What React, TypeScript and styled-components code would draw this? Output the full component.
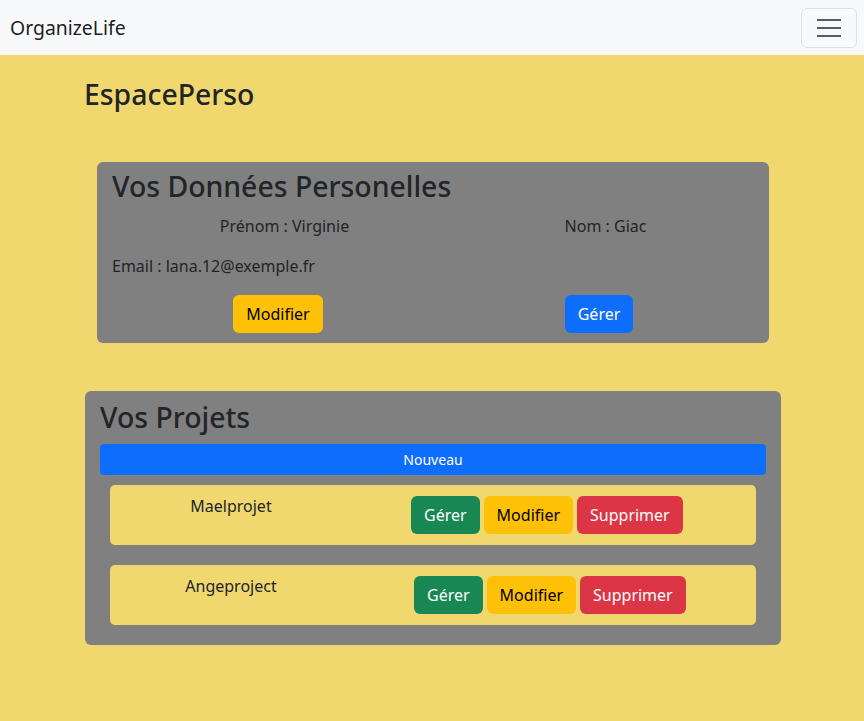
import React from "react";
import styled, { createGlobalStyle } from "styled-components";

const GlobalStyle = createGlobalStyle`
  * { box-sizing: border-box; }
  body {
    margin: 0;
    background: #f0d86f;
    font-family: "Noto Sans", "Open Sans", sans-serif;
    font-size: 16px;
    line-height: 1.5;
    color: #212529;
  }
`;

const Navbar = styled.nav`
  height: 55px;
  background: #f8f9fa;
  display: flex;
  align-items: center;
  justify-content: space-between;
  padding: 0 7px 0 10px;
`;

const Brand = styled.a`
  font-size: 19.4px;
  line-height: 30px;
  color: rgba(0, 0, 0, 0.9);
  text-decoration: none;
`;

const Toggler = styled.button`
  width: 56px;
  height: 40px;
  border: 1px solid rgba(0, 0, 0, 0.1);
  border-radius: 6px;
  background: transparent;
  display: flex;
  align-items: center;
  justify-content: center;
  padding: 0;
`;

const Container = styled.main`
  width: 720px;
  margin: 0 auto;
  padding: 0 11px 40px 13px;
`;

const PageTitle = styled.h2`
  margin: 22px 0 0 -1px;
  font-size: 28.4px;
  font-weight: 500;
  line-height: 1.23;
`;

const Card = styled.section<{ $inset?: boolean }>`
  background: #808080;
  border-radius: 6px;
  margin: ${(p) => (p.$inset ? "50px 12px 0" : "48px 0 0")};
  padding: ${(p) => (p.$inset ? "7px 15px 10px" : "9px 15px 20px")};
`;

const CardTitle = styled.h2<{ $gap: number }>`
  margin: 0 0 ${(p) => p.$gap}px;
  font-size: 28.4px;
  font-weight: 500;
  line-height: 1.23;
`;

const InfoGrid = styled.div<{ $last?: boolean }>`
  display: grid;
  grid-template-columns: 1fr 1fr;
  margin-bottom: ${(p) => (p.$last ? "0" : "16px")};
`;

const InfoCell = styled.p<{ $shift: number }>`
  margin: 0;
  text-align: center;
  padding-left: ${(p) => p.$shift}px;
`;

const InfoLine = styled.p`
  margin: 0 0 17px;
`;

const Button = styled.button<{ $variant: "primary" | "warning" | "success" | "danger"; $small?: boolean }>`
  font-family: inherit;
  font-size: ${(p) => (p.$small ? "14px" : "16px")};
  line-height: ${(p) => (p.$small ? "21px" : "24px")};
  padding: ${(p) => (p.$small ? "4px 8px" : "6px 12px")};
  border-radius: ${(p) => (p.$small ? "4px" : "6px")};
  border: 1px solid transparent;
  cursor: pointer;
  background: ${(p) =>
    ({ primary: "#0d6efd", warning: "#ffc107", success: "#198754", danger: "#dc3545" }[p.$variant])};
  color: ${(p) => (p.$variant === "warning" ? "#000" : "#fff")};
`;

const BlockButton = styled(Button)`
  display: block;
  width: 100%;
`;

const ButtonCell = styled.div<{ $shift: number }>`
  display: flex;
  justify-content: center;
  padding-left: ${(p) => p.$shift}px;
`;

const ProjectRow = styled.div`
  display: flex;
  align-items: flex-start;
  height: 60px;
  margin: 20px 10px 0;
  background: #f0d86f;
  border-radius: 5px;
  &:first-of-type {
    margin-top: 10px;
  }
`;

const ProjectName = styled.div`
  width: 242px;
  text-align: center;
  padding-top: 9px;
`;

const ProjectActions = styled.div<{ $offset: number }>`
  display: flex;
  gap: 4px;
  margin-left: ${(p) => p.$offset}px;
  padding-top: 11px;
`;

const MenuIcon = () => (
  <svg width="30" height="30" viewBox="0 0 30 30" aria-hidden="true">
    <path
      d="M3 7h24M3 15h24M3 23h24"
      stroke="rgba(33,37,41,0.75)"
      strokeWidth="2"
      strokeLinecap="butt"
    />
  </svg>
);

const projects = [
  { name: "Maelprojet", offset: 59 },
  { name: "Angeproject", offset: 62 },
];

export default function App() {
  return (
    <>
      <GlobalStyle />
      <Navbar>
        <Brand href="#">OrganizeLife</Brand>
        <Toggler aria-label="menu">
          <MenuIcon />
        </Toggler>
      </Navbar>
      <Container>
        <PageTitle>EspacePerso</PageTitle>
        <Card $inset>
          <CardTitle $gap={10}>Vos Données Personelles</CardTitle>
          <InfoGrid>
            <InfoCell $shift={24}>Prénom : Virginie</InfoCell>
            <InfoCell $shift={24}>Nom : Giac</InfoCell>
          </InfoGrid>
          <InfoLine>Email : lana.12@exemple.fr</InfoLine>
          <InfoGrid $last>
            <ButtonCell $shift={11}>
              <Button $variant="warning">Modifier</Button>
            </ButtonCell>
            <ButtonCell $shift={11}>
              <Button $variant="primary">Gérer</Button>
            </ButtonCell>
          </InfoGrid>
        </Card>
        <Card>
          <CardTitle $gap={9}>Vos Projets</CardTitle>
          <BlockButton $variant="primary" $small>
            Nouveau
          </BlockButton>
          {projects.map((p) => (
            <ProjectRow key={p.name}>
              <ProjectName>{p.name}</ProjectName>
              <ProjectActions $offset={p.offset}>
                <Button $variant="success">Gérer</Button>
                <Button $variant="warning">Modifier</Button>
                <Button $variant="danger">Supprimer</Button>
              </ProjectActions>
            </ProjectRow>
          ))}
        </Card>
      </Container>
    </>
  );
}
